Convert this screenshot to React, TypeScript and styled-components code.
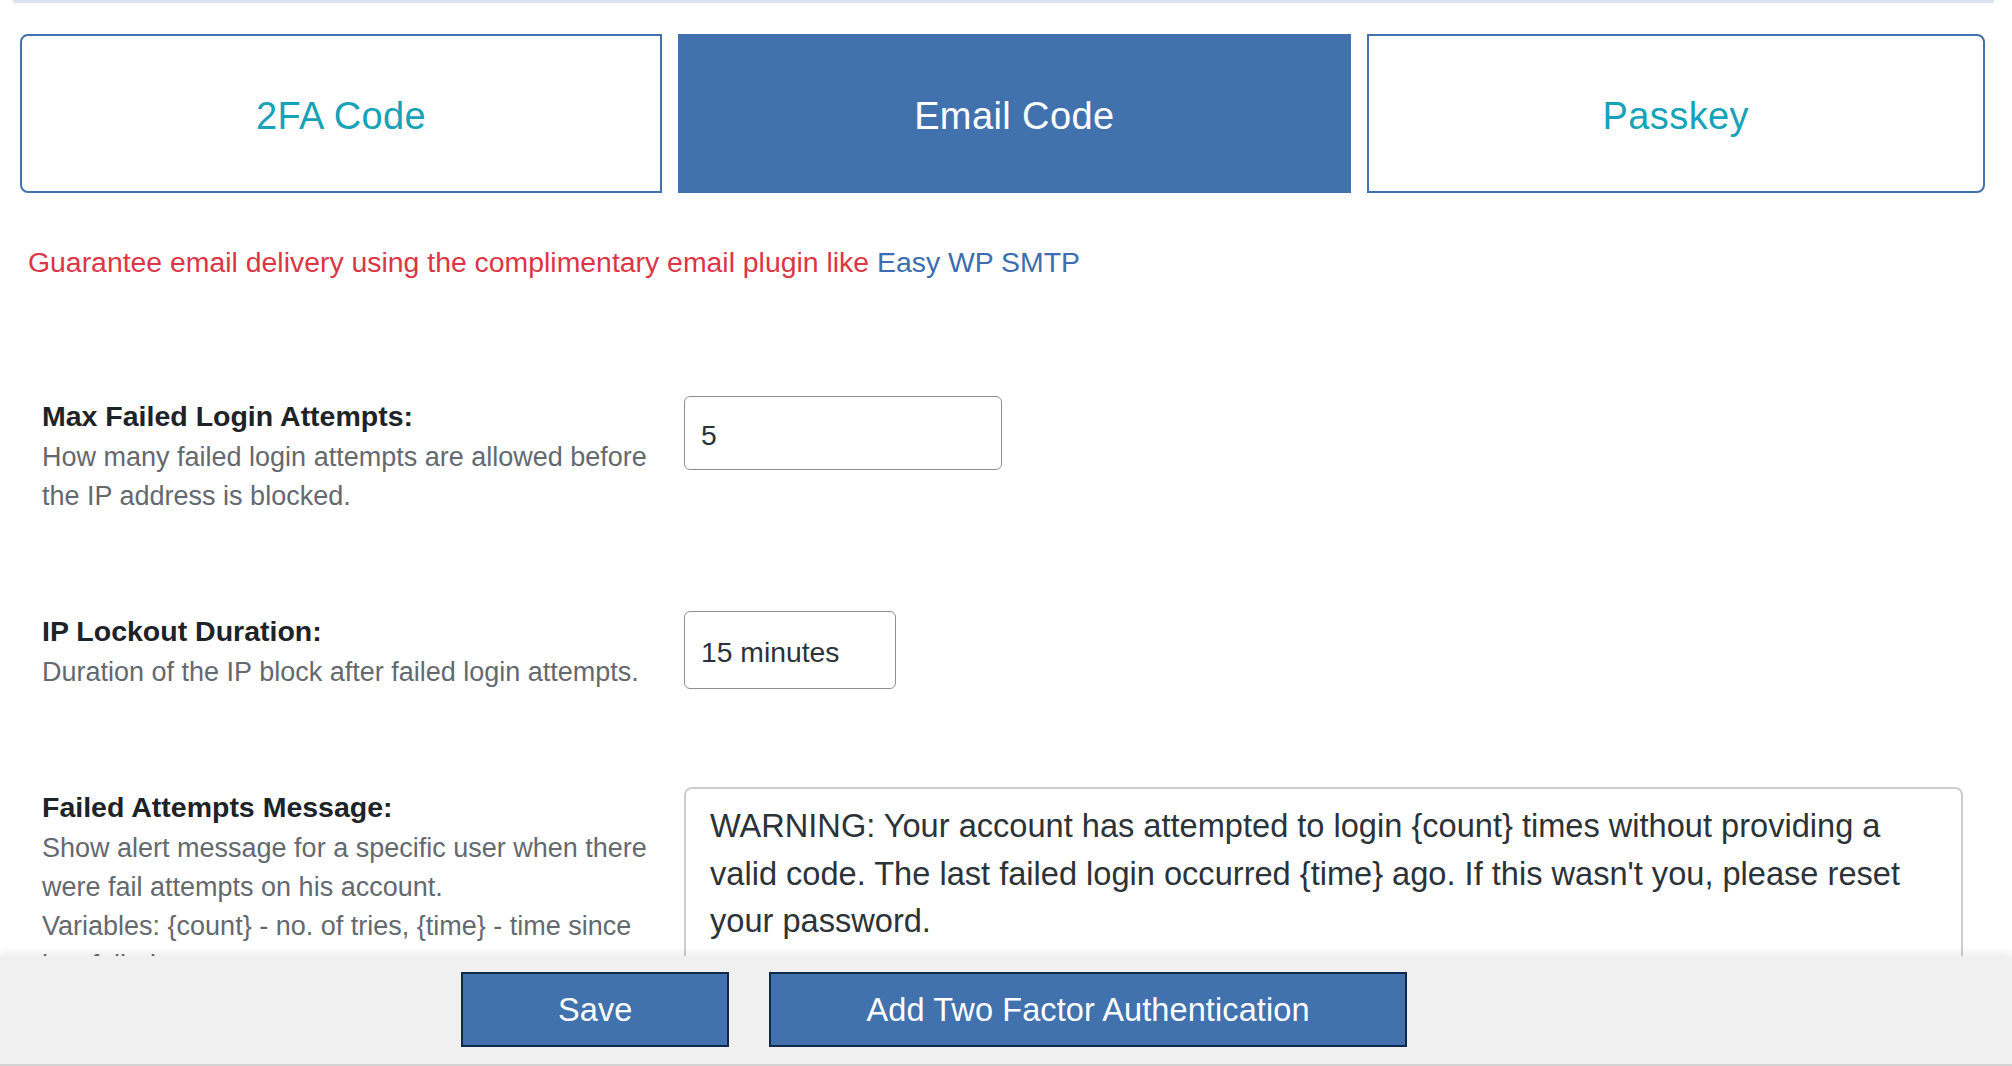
import styled, { createGlobalStyle } from 'styled-components';
import { useState } from 'react';

const GlobalStyle = createGlobalStyle`
	html, body {
		margin: 0;
		padding: 0;
		background: #ffffff;
		font-family: 'Liberation Sans', Arial, sans-serif;
	}
	* {
		box-sizing: border-box;
	}
`;

const tabs = [
	{ key: 'totp', label: '2FA Code' },
	{ key: 'email', label: 'Email Code' },
	{ key: 'passkey', label: 'Passkey' },
];

export default function App() {
	const [active, setActive] = useState('email');

	return (
		<>
			<GlobalStyle />
			<StyledPage>
				<StyledTopLine />
				<StyledTabs>
					{tabs.map((tab, i) => (
						<StyledTab
							key={tab.key}
							$active={active === tab.key}
							$position={i === 0 ? 'first' : i === tabs.length - 1 ? 'last' : 'middle'}
							onClick={() => setActive(tab.key)}
						>
							{tab.label}
						</StyledTab>
					))}
				</StyledTabs>

				<StyledNotice>
					Guarantee email delivery using the complimentary email plugin like{' '}
					<a href='#easy-wp-smtp'>Easy WP SMTP</a>
				</StyledNotice>

				<StyledFields>
					<StyledRow>
						<div>
							<StyledLabel>Max Failed Login Attempts:</StyledLabel>
							<StyledHint>
								How many failed login attempts are allowed before the IP address is blocked.
							</StyledHint>
						</div>
						<StyledInput type='text' defaultValue='5' $width={318} $height={74} />
					</StyledRow>

					<StyledRow>
						<div>
							<StyledLabel>IP Lockout Duration:</StyledLabel>
							<StyledHint>Duration of the IP block after failed login attempts.</StyledHint>
						</div>
						<StyledInput type='text' defaultValue='15 minutes' $width={212} $height={78} />
					</StyledRow>

					<StyledRow>
						<div>
							<StyledLabel>Failed Attempts Message:</StyledLabel>
							<StyledHint>
								Show alert message for a specific user when there were fail attempts on his account.
								<br />
								Variables: {'{count}'} - no. of tries, {'{time}'} - time since last failed attempt.
							</StyledHint>
						</div>
						<StyledTextarea
							defaultValue="WARNING: Your account has attempted to login {count} times without providing a valid code. The last failed login occurred {time} ago. If this wasn't you, please reset your password."
						/>
					</StyledRow>
				</StyledFields>
			</StyledPage>

			<StyledFooter>
				<StyledButton>Save</StyledButton>
				<StyledButton>Add Two Factor Authentication</StyledButton>
			</StyledFooter>
		</>
	);
}

const StyledPage = styled.div`
	padding: 0 27px 160px 20px;
`;

const StyledTopLine = styled.div`
	height: 3px;
	margin: 0 -9px 0 -7px;
	background: #dae3ef;
`;

const StyledTabs = styled.div`
	display: flex;
	gap: 16px;
	margin-top: 31px;
`;

const StyledTab = styled.button<{ $active: boolean; $position: 'first' | 'middle' | 'last' }>`
	flex: 1 1 auto;
	height: 159px;
	padding: 5px 40px 0;
	font-family: 'Liberation Sans', Arial, sans-serif;
	font-size: 38px;
	letter-spacing: 0.4px;
	cursor: pointer;
	border: 2px solid #4172ae;
	color: ${p => (p.$active ? '#ffffff' : '#17a2b8')};
	background: ${p => (p.$active ? '#4172ae' : '#ffffff')};
	border-radius: ${p =>
		p.$active ? '0' : p.$position === 'first' ? '8px 0 0 8px' : p.$position === 'last' ? '0 8px 8px 0' : '0'};
`;

const StyledNotice = styled.p`
	margin: 50px 0 0 8px;
	font-size: 28.4px;
	line-height: 39px;
	color: #dc3545;
	a {
		color: #3d6db0;
		text-decoration: none;
	}
`;

const StyledFields = styled.div`
	display: flex;
	flex-direction: column;
	gap: 95px;
	margin-top: 114px;
	padding: 0 22px;
`;

const StyledRow = styled.div`
	display: grid;
	grid-template-columns: 620px 1fr;
	column-gap: 22px;
	align-items: start;
`;

const StyledLabel = styled.div`
	font-size: 28.5px;
	font-weight: 700;
	line-height: 40px;
	color: #1d2327;
`;

const StyledHint = styled.div`
	font-size: 27px;
	line-height: 39px;
	color: #646970;
	margin-top: 2px;
`;

const StyledInput = styled.input<{ $width: number; $height: number }>`
	width: ${p => p.$width}px;
	height: ${p => p.$height}px;
	padding: 4px 16px 0;
	border: 1.5px solid #8c8f94;
	border-radius: 6px;
	font-family: 'Liberation Sans', Arial, sans-serif;
	font-size: 28.3px;
	color: #2c3338;
	background: #ffffff;
	outline: none;
`;

const StyledTextarea = styled.textarea`
	width: 100%;
	height: 210px;
	padding: 13px 40px 12px 24px;
	border: 2px solid #c9ced6;
	border-radius: 8px;
	font-family: 'Liberation Sans', Arial, sans-serif;
	font-size: 32.6px;
	line-height: 47.5px;
	color: #2c3338;
	resize: none;
	outline: none;
	overflow: hidden;
`;

const StyledFooter = styled.div`
	position: fixed;
	left: 0;
	right: 0;
	bottom: 0;
	height: 110px;
	display: flex;
	align-items: flex-start;
	gap: 40px;
	padding: 16px 0 0 461px;
	background: #f0f0f0;
	border-bottom: 2px solid #d2d2d2;
	box-shadow: 0 -3px 8px rgba(0, 0, 0, 0.08);
`;

const StyledButton = styled.button`
	height: 75px;
	padding: 2px 95px 0;
	font-family: 'Liberation Sans', Arial, sans-serif;
	font-size: 32.5px;
	letter-spacing: 0.1px;
	color: #ffffff;
	background: #4172ae;
	border: 2px solid #10284a;
	cursor: pointer;
`;
